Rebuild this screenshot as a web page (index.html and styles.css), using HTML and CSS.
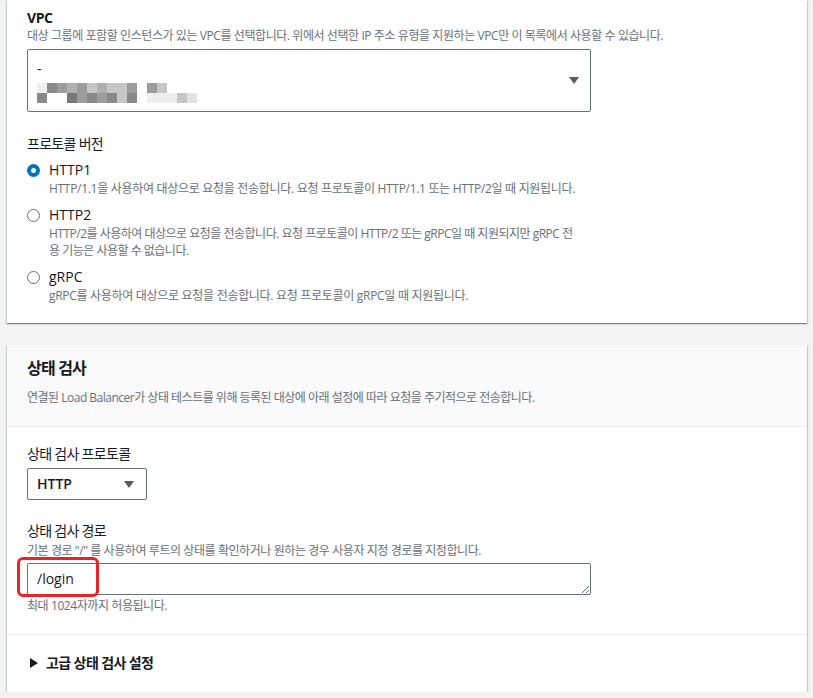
FILE: index.html
```html
<!DOCTYPE html>
<html lang="ko">
<head>
<meta charset="utf-8">
<link rel="stylesheet" href="styles.css">
</head>
<body>
<div class="page">
  <section class="card card-top">
    <div class="field">
      <div class="label label-bold">VPC</div>
      <div class="desc">대상 그룹에 포함할 인스턴스가 있는 VPC를 선택합니다. 위에서 선택한 IP 주소 유형을 지원하는 VPC만 이 목록에서 사용할 수 있습니다.</div>
      <div class="select select-vpc">
        <div class="select-body">
          <div class="vpc-name">-</div>
          <div class="pix-row">
            <span class="px c1"></span><span class="px c5"></span><span class="px c4"></span><span class="px c3"></span><span class="px c4"></span><span class="px c2"></span><span class="px c3"></span><span class="px c2"></span><span class="px c2"></span><span class="px c4"></span><span class="px c0"></span><span class="px c4"></span><span class="px c2"></span>
          </div>
          <div class="pix-row">
            <span class="px c5"></span><span class="px c0"></span><span class="px c0"></span><span class="px c6"></span><span class="px c4"></span><span class="px c5"></span><span class="px c4"></span><span class="px c5"></span><span class="px c2"></span><span class="px c5"></span><span class="px c0"></span><span class="px c1"></span><span class="px c1"></span><span class="px c1"></span><span class="px c2"></span><span class="px c1b"></span>
          </div>
        </div>
        <svg class="caret" width="10" height="7" viewBox="0 0 10 7"><path d="M0 0 H10 L5 7 Z" fill="#545b64"/></svg>
      </div>
    </div>

    <div class="field field-radio">
      <div class="label">프로토콜 버전</div>
      <div class="radio-item">
        <span class="radio radio-on"></span>
        <div class="radio-text">
          <div class="radio-label">HTTP1</div>
          <div class="desc radio-desc">HTTP/1.1을 사용하여 대상으로 요청을 전송합니다. 요청 프로토콜이 HTTP/1.1 또는 HTTP/2일 때 지원됩니다.</div>
        </div>
      </div>
      <div class="radio-item">
        <span class="radio"></span>
        <div class="radio-text">
          <div class="radio-label">HTTP2</div>
          <div class="desc radio-desc radio-desc-tight">HTTP/2를 사용하여 대상으로 요청을 전송합니다. 요청 프로토콜이 HTTP/2 또는 gRPC일 때 지원되지만 gRPC 전<br>용 기능은 사용할 수 없습니다.</div>
        </div>
      </div>
      <div class="radio-item">
        <span class="radio"></span>
        <div class="radio-text">
          <div class="radio-label">gRPC</div>
          <div class="desc radio-desc">gRPC를 사용하여 대상으로 요청을 전송합니다. 요청 프로토콜이 gRPC일 때 지원됩니다.</div>
        </div>
      </div>
    </div>
  </section>

  <section class="card card-health">
    <header class="card-header">
      <h2 class="title">상태 검사</h2>
      <div class="desc header-desc">연결된 Load Balancer가 상태 테스트를 위해 등록된 대상에 아래 설정에 따라 요청을 주기적으로 전송합니다.</div>
    </header>
    <div class="card-body">
      <div class="field">
        <div class="label">상태 검사 프로토콜</div>
        <div class="select select-small">
          <span class="select-value">HTTP</span>
          <svg class="caret" width="10" height="7" viewBox="0 0 10 7"><path d="M0 0 H10 L5 7 Z" fill="#545b64"/></svg>
        </div>
      </div>
      <div class="field field-path">
        <div class="label">상태 검사 경로</div>
        <div class="desc path-desc">기본 경로 "/" 를 사용하여 루트의 상태를 확인하거나 원하는 경우 사용자 지정 경로를 지정합니다.</div>
        <div class="input-wrap">
          <textarea class="textarea" rows="1">/login</textarea>
          <span class="highlight"></span>
        </div>
        <div class="desc hint">최대 1024자까지 허용됩니다.</div>
      </div>
    </div>
    <div class="card-footer">
      <div class="expander">
        <svg class="expander-icon" width="8" height="10" viewBox="0 0 8 10"><path d="M0 0 L8 5 L0 10 Z" fill="#16191f"/></svg>
        <span class="expander-label">고급 상태 검사 설정</span>
      </div>
    </div>
  </section>
</div>
</body>
</html>
```

FILE: styles.css
```css
* { box-sizing: border-box; }

body {
  margin: 0;
  background: #f2f3f3;
  font-family: "Open Sans", "Noto Sans CJK KR", sans-serif;
  color: #16191f;
  overflow: hidden;
}

.page {
  width: 800px;
  margin-left: 7px;
}

.card {
  background: #fff;
  box-shadow: 0 1px 1px 0 rgba(0, 28, 36, 0.3), 1px 1px 1px 0 rgba(0, 28, 36, 0.15), -1px 1px 1px 0 rgba(0, 28, 36, 0.15);
}

.card-top {
  padding: 8px 20px 19px;
}

.card-health {
  margin-top: 22px;
}

.label {
  font-size: 14px;
  line-height: 20px;
  letter-spacing: -0.7px;
}

.label-bold { font-weight: 700; letter-spacing: -0.4px; }

.desc {
  font-size: 12px;
  line-height: 16px;
  color: #687078;
  letter-spacing: -0.42px;
}

.select {
  border: 1px solid #687078;
  border-radius: 2px;
  display: flex;
  align-items: center;
  justify-content: space-between;
  background: #fff;
}

.select-vpc {
  margin-top: 5px;
  width: 564px;
  height: 63px;
  padding: 0 11px 0 9px;
}

.select-vpc .caret { margin-top: -1px; }

.select-body {
  display: flex;
  flex-direction: column;
  padding-top: 2px;
}

.vpc-name {
  font-size: 14px;
  line-height: 16px;
  height: 22px;
}

.pix-row {
  display: flex;
  height: 10px;
}

.px {
  width: 10px;
  height: 10px;
  display: block;
}
.px.c0 { background: #ffffff; }
.px.c1 { background: #eeeeee; }
.px.c1b { background: #e2e2e2; }
.px.c2 { background: #c4c6c8; }
.px.c3 { background: #aeb0b2; }
.px.c4 { background: #9a9c9e; }
.px.c5 { background: #87898b; }
.px.c6 { background: #76787a; }

.field-radio {
  margin-top: 22px;
}

.radio-item {
  display: flex;
  margin-top: 6px;
}

.radio-item + .radio-item {
  margin-top: 8px;
}

.radio {
  width: 13px;
  height: 13px;
  border-radius: 50%;
  border: 1px solid #687078;
  margin-top: 4px;
  flex: none;
  background: #fff;
}

.radio-on {
  border: 4px solid #0073bb;
}

.radio-text {
  margin-left: 9px;
}

.radio-label {
  font-size: 14px;
  line-height: 20px;
}

.radio-desc {
  line-height: 17px;
  letter-spacing: -0.3px;
}

.radio-desc-tight {
  letter-spacing: -0.5px;
}

.card-header {
  background: #fafafa;
  border-bottom: 1px solid #eaeded;
  padding: 11px 20px 19px;
}

.title {
  margin: 0;
  font-size: 16px;
  line-height: 24px;
  font-weight: 700;
  letter-spacing: -0.8px;
}

.header-desc {
  margin-top: 9px;
  line-height: 18px;
  letter-spacing: -0.5px;
}

.card-body {
  padding: 17px 20px 20px;
  border-bottom: 1px solid #eaeded;
}

.select-small {
  margin-top: 4px;
  width: 120px;
  height: 32px;
  padding: 0 12px 0 9px;
}

.select-value {
  font-size: 14px;
  font-weight: 600;
  line-height: 20px;
}

.field-path {
  margin-top: 21px;
}

.path-desc {
  margin-top: 1px;
  line-height: 17px;
}

.input-wrap {
  position: relative;
  margin-top: 4px;
  width: 564px;
}

.textarea {
  display: block;
  width: 564px;
  height: 32px;
  border: 1px solid #687078;
  border-radius: 2px;
  padding: 5px 9px;
  font-family: "Open Sans", "Noto Sans CJK KR", sans-serif;
  font-size: 14px;
  line-height: 20px;
  color: #16191f;
  resize: both;
  overflow: hidden;
  background: #fff;
}

.highlight {
  position: absolute;
  left: -10px;
  top: -6px;
  width: 82px;
  height: 40px;
  border: 3px solid #e8232a;
  border-radius: 6px;
  pointer-events: none;
}

.hint {
  margin-top: 3px;
}

.card-footer {
  padding: 18px 20px 19px;
}

.expander {
  display: flex;
  align-items: center;
  height: 20px;
}

.expander-icon {
  margin-left: 3px;
}

.expander-label {
  margin-left: 8px;
  font-size: 14px;
  font-weight: 700;
  line-height: 20px;
  letter-spacing: -0.6px;
}
```
